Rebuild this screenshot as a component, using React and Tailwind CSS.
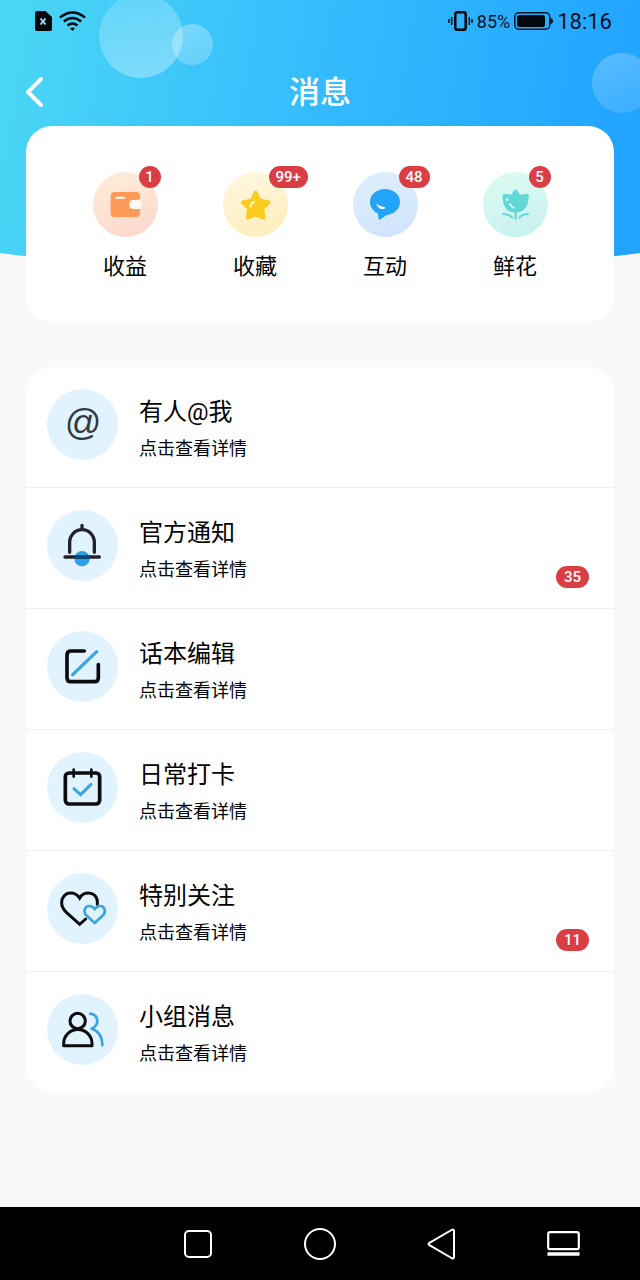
import React from 'react';
import clsx from 'clsx';

function Badge({ className, children }) {
  return (
    <span
      className={clsx(
        'flex h-[22px] min-w-[22px] items-center justify-center rounded-full bg-[#db3d45] font-[Roboto,sans-serif] text-[15px] font-medium leading-none text-white',
        className
      )}
    >
      {children}
    </span>
  );
}

function WalletIcon() {
  return (
    <svg viewBox="0 0 195 195" className="size-full" fill="none" aria-hidden="true">
      <path
        d="M65 60H129Q141 60 141 72V83H126Q109 84 109 97Q109 110 126 111H141V123Q141 135 129 135H65Q53 135 53 123V72Q53 60 65 60Z"
        fill="#fe9a57"
      />
      <rect x="109" y="84" width="37" height="27" rx="12" fill="#fff8f3" />
      <path d="M70 77H93" stroke="#fff" strokeWidth="6" strokeLinecap="round" />
    </svg>
  );
}

function StarIcon() {
  return (
    <svg viewBox="0 0 195 195" className="size-full" fill="none" aria-hidden="true">
      <path
        d="M98 61L110 85L137 91L118 110L122 137L98 128L74 137L78 110L59 91L86 85Z"
        fill="#fbcb20"
        stroke="#fbcb20"
        strokeWidth="11"
        strokeLinejoin="round"
      />
      <path d="M82 104Q83 92 94 89" stroke="#fff6d0" strokeWidth="6" strokeLinecap="round" />
    </svg>
  );
}

function ChatIcon() {
  return (
    <svg viewBox="0 0 195 195" className="size-full" fill="none" aria-hidden="true">
      <ellipse cx="96" cy="90" rx="45" ry="39" fill="#24a4f8" />
      <path d="M74 118L77 141Q79 144 82 142L106 126Z" fill="#24a4f8" />
      <path d="M72 96C76 102 84 105 96 107C90 113 75 110 72 96Z" fill="#fff" stroke="#fff" strokeWidth="3" strokeLinejoin="round" />
    </svg>
  );
}

function FlowerIcon() {
  return (
    <svg viewBox="0 0 195 195" className="size-full" fill="none" aria-hidden="true">
      <path
        d="M98 52C104 57 108 62 111 69C119 66 128 65 135 66Q137 66 137 69C138 96 128 122 98 122C68 122 58 96 59 69Q59 66 61 66C68 65 77 66 85 69C88 62 92 57 98 52Z"
        fill="#62d8d6"
      />
      <path d="M98 120V141M61 126Q78 126 87 137M135 126Q118 126 109 137" stroke="#62d8d6" strokeWidth="6" strokeLinecap="round" />
      <circle cx="72" cy="83" r="4" fill="#d8fbf5" />
      <path d="M80 96Q85 104 92 107" stroke="#d8fbf5" strokeWidth="5" strokeLinecap="round" />
    </svg>
  );
}

function BellIcon() {
  return (
    <svg viewBox="0 0 213 213" className="size-full" fill="none" strokeLinecap="round" aria-hidden="true">
      <circle cx="105" cy="146" r="23" fill="#2b9fea" />
      <path d="M68 127V97A37 38 0 0 1 142 97V127M105 46V58" stroke="#22222f" strokeWidth="10" />
      <path d="M54 141H157" stroke="#22222f" strokeWidth="10" />
      <path d="M83 141H127" stroke="#0b4c80" strokeWidth="10" strokeLinecap="butt" />
    </svg>
  );
}

function EditIcon() {
  return (
    <svg viewBox="0 0 213 213" className="size-full" fill="none" strokeLinecap="round" aria-hidden="true">
      <path d="M112 60H72Q60 60 60 72V140Q60 152 72 152H142Q154 152 154 140V101" stroke="#0c0c10" strokeWidth="11" />
      <path d="M77 131L149 62" stroke="#3aa5e0" strokeWidth="10" />
    </svg>
  );
}

function CalendarIcon() {
  return (
    <svg viewBox="0 0 213 213" className="size-full" fill="none" strokeLinecap="round" aria-hidden="true">
      <rect x="55" y="63" width="103" height="93" rx="11" stroke="#0c0c10" strokeWidth="11" />
      <path d="M80 53V74M133 53V74" stroke="#0c0c10" strokeWidth="8" />
      <path d="M81 110L101 128L132 97" stroke="#3aa5e0" strokeWidth="9" />
    </svg>
  );
}

function HeartsIcon() {
  return (
    <svg viewBox="0 0 213 213" className="size-full" fill="none" strokeLinecap="round" aria-hidden="true">
      <path
        d="M151 94C153 68 137 60 124 60C112 60 103 66 98 75C92 66 82 60 71 60C54 60 44 74 44 89C44 103 51 111 58 118L98 154L116 138"
        stroke="#0c0c10"
        strokeWidth="9"
      />
      <path
        d="M143 150L117 126C108 116 113 99 127 99C135 99 140 103 143 109C146 103 151 99 159 99C173 99 178 116 169 126Z"
        stroke="#3aa5e0"
        strokeWidth="8"
        strokeLinejoin="round"
      />
    </svg>
  );
}

function GroupIcon() {
  return (
    <svg viewBox="0 0 213 213" className="size-full" fill="none" strokeLinecap="round" strokeLinejoin="round" aria-hidden="true">
      <circle cx="92" cy="81" r="23" stroke="#0c0c10" strokeWidth="9" />
      <path d="M50 155V148A42 41 0 0 1 135 148V155Z" stroke="#0c0c10" strokeWidth="9" />
      <path d="M130 59C156 64 158 92 134 104C156 111 166 130 166 154" stroke="#3aa5e0" strokeWidth="8" />
    </svg>
  );
}

const shortcuts = [
  { label: '收益', badge: '1', icon: WalletIcon, bg: 'from-[#fdeeda] to-[#fdd6cb]' },
  { label: '收藏', badge: '99+', icon: StarIcon, bg: 'from-[#fef8e2] to-[#feedb8]' },
  { label: '互动', badge: '48', icon: ChatIcon, bg: 'from-[#dff0fb] to-[#cfe2fd]' },
  { label: '鲜花', badge: '5', icon: FlowerIcon, bg: 'from-[#e0fbf2] to-[#c4f0ef]' },
];

const messages = [
  { title: '有人@我' },
  { title: '官方通知', icon: BellIcon, badge: '35' },
  { title: '话本编辑', icon: EditIcon },
  { title: '日常打卡', icon: CalendarIcon },
  { title: '特别关注', icon: HeartsIcon, badge: '11' },
  { title: '小组消息', icon: GroupIcon },
];

function Backdrop() {
  return (
    <div className="absolute inset-x-0 top-0 h-[276px] overflow-hidden" aria-hidden="true">
      <svg viewBox="0 0 640 276" preserveAspectRatio="none" className="size-full">
        <defs>
          <linearGradient id="sky" gradientUnits="userSpaceOnUse" x1="0" y1="80" x2="600" y2="190">
            <stop offset="0" stopColor="#4ad6f5" />
            <stop offset="0.5" stopColor="#35bcfd" />
            <stop offset="1" stopColor="#22a5ff" />
          </linearGradient>
        </defs>
        <path d="M0 0H640V253Q320 297 0 253Z" fill="url(#sky)" />
      </svg>
      <div className="absolute -top-1.5 left-[99px] size-[84px] rounded-full bg-linear-160 from-white/15 to-white/35" />
      <div className="absolute top-6 left-[172px] size-[41px] rounded-full bg-linear-160 from-white/30 to-white/20" />
      <div className="absolute top-[53px] -right-3 size-[60px] rounded-full bg-linear-160 from-white/25 to-white/10" />
    </div>
  );
}

function StatusBar() {
  return (
    <div className="flex h-[42px] items-center justify-between pr-7 pl-[35px] font-[Roboto,sans-serif] text-[#06121f]">
      <div className="flex items-center gap-[7px]">
        <svg width="17" height="20" viewBox="0 0 17 20" aria-hidden="true">
          <path d="M2 0H10.500L17 6V18Q17 20 15 20H2Q0 20 0 18V2Q0 0 2 0Z" fill="#04080d" />
          <path d="M5.500 7.500L10.500 13.500M10.500 7.500L5.500 13.500" stroke="#9be6fa" strokeWidth="1.800" />
        </svg>
        <svg width="27" height="20" viewBox="0 0 27 20" fill="none" stroke="#04080d" strokeWidth="2.600" aria-hidden="true">
          <path d="M1 6.500Q13.500 -3.500 26 6.500M4.800 10.500Q13.500 3.500 22.200 10.500M8.500 14.500Q13.500 10.500 18.500 14.500" />
          <path d="M11 17.300Q13.500 15.500 16 17.300L13.500 20Z" fill="#04080d" stroke="none" />
        </svg>
      </div>
      <div className="flex items-center gap-1">
        <svg width="25" height="20" viewBox="0 0 25 20" fill="none" stroke="#04080d" aria-hidden="true">
          <rect x="7.300" y="1.300" width="10.400" height="17.400" rx="2" strokeWidth="2.500" />
          <path d="M3.700 6V14M1 8V12M21.300 6V14M24 8V12" strokeWidth="1.500" />
        </svg>
        <span className="pt-0.5 text-lg leading-none">85%</span>
        <svg width="39" height="18" viewBox="0 0 39 18" aria-hidden="true">
          <rect x="0.800" y="0.800" width="35" height="16.400" rx="4" fill="none" stroke="#06121f" strokeWidth="1.500" />
          <rect x="3" y="3" width="28" height="12" rx="2.500" fill="#04080d" />
          <path d="M36 6Q39 6.500 39 9Q39 11.500 36 12Z" fill="#06121f" />
        </svg>
        <time className="pt-0.5 text-[22px] leading-none">18:16</time>
      </div>
    </div>
  );
}

function TitleBar() {
  return (
    <div className="grid h-[84px] grid-cols-[1fr_auto_1fr] items-center px-[26px] pt-4">
      <button type="button" aria-label="返回" className="justify-self-start">
        <svg width="17" height="30" viewBox="0 0 17 30" fill="none" aria-hidden="true">
          <path d="M15 2L2 15L15 28" stroke="#fff" strokeWidth="4" strokeLinecap="round" />
        </svg>
      </button>
      <h1 className="text-[31px] leading-none font-medium text-white">消息</h1>
    </div>
  );
}

function Shortcuts() {
  return (
    <nav className="mx-[26px] grid grid-cols-4 rounded-[26px] bg-white px-[34px] pt-[46px] pb-[38px]">
      {shortcuts.map(({ label, badge, icon: Icon, bg }) => (
        <a key={label} href="#" className="flex flex-col items-center gap-[13px]">
          <span className={clsx('relative size-[65px] rounded-full bg-linear-160', bg)}>
            <Icon />
            <Badge className={clsx('absolute -top-1.5 left-[46px]', badge.length > 1 && 'px-[7px]')}>{badge}</Badge>
          </span>
          <span className="text-[22px] leading-[34px]">{label}</span>
        </a>
      ))}
    </nav>
  );
}

function MessageList() {
  return (
    <ul className="mx-[26px] mt-[45px] rounded-[26px] bg-white">
      {messages.map(({ title, icon: Icon, badge }) => (
        <li key={title} className="border-b border-[#f1f0f1] last:border-transparent">
          <a href="#" className="flex h-[120px] items-start gap-[21px] pt-[22px] pr-[25px] pl-[21px]">
            <span className="flex size-[71px] shrink-0 items-center justify-center rounded-full bg-[#e1f3fe]">
              {Icon ? (
                <Icon />
              ) : (
                <span className="pb-1 font-['Liberation_Sans',sans-serif] text-4xl leading-none text-[#2f3a42] italic">@</span>
              )}
            </span>
            <span className="flex flex-1 flex-col gap-1 pt-[5px]">
              <span className="text-2xl leading-9">{title}</span>
              <span className="text-lg leading-[30px]">点击查看详情</span>
            </span>
            {badge && <Badge className="mb-5 self-end px-2">{badge}</Badge>}
          </a>
        </li>
      ))}
    </ul>
  );
}

function SystemNav() {
  return (
    <div className="mt-auto grid h-[73px] grid-cols-5 items-center justify-items-center bg-black px-4">
      <button type="button" aria-label="最近任务" className="col-start-2">
        <svg width="28" height="28" viewBox="0 0 28 28" fill="none" stroke="#fff" strokeWidth="2" aria-hidden="true">
          <rect x="1" y="1" width="26" height="26" rx="4" />
        </svg>
      </button>
      <button type="button" aria-label="主屏幕">
        <svg width="32" height="32" viewBox="0 0 32 32" fill="none" stroke="#fff" strokeWidth="2" aria-hidden="true">
          <circle cx="16" cy="16" r="15" />
        </svg>
      </button>
      <button type="button" aria-label="返回上一级">
        <svg width="30" height="32" viewBox="0 0 30 32" fill="none" stroke="#fff" strokeWidth="2" strokeLinejoin="round" aria-hidden="true">
          <path d="M2 15.200L24.500 2Q27 0.800 27 3V29Q27 31.200 24.500 30L2 16.800Q1 16 2 15.200Z" />
        </svg>
      </button>
      <button type="button" aria-label="收起">
        <svg width="33" height="25" viewBox="0 0 33 25" fill="none" aria-hidden="true">
          <rect x="1.200" y="1.200" width="30.600" height="17" rx="2" stroke="#fff" strokeWidth="2.200" />
          <path d="M0.500 23H32.500" stroke="#fff" strokeWidth="3.500" />
        </svg>
      </button>
    </div>
  );
}

export default function App() {
  return (
    <div className="relative flex min-h-screen flex-col bg-[#faf8f9] font-[Roboto,'Noto_Sans_CJK_SC',sans-serif] text-black">
      <Backdrop />
      <div className="relative mb-8">
        <StatusBar />
        <TitleBar />
        <Shortcuts />
        <MessageList />
      </div>
      <SystemNav />
    </div>
  );
}
